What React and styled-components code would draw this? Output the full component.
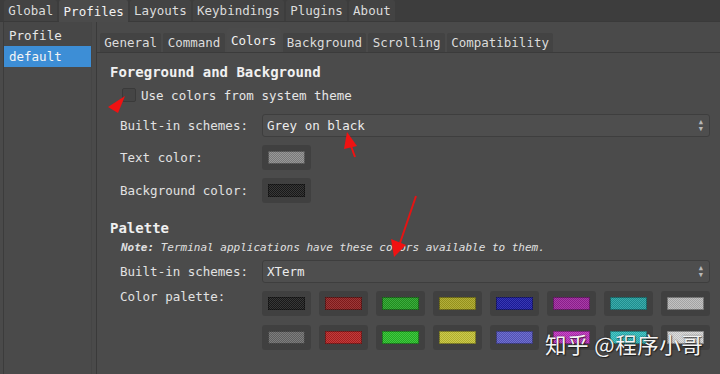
import React from "react";
import styled, { createGlobalStyle } from "styled-components";

const Global = createGlobalStyle`
  html, body { margin: 0; padding: 0; background: #484848; }
  body { font-family: "DejaVu Sans Mono", "Liberation Mono", monospace; font-size: 12.5px; color: #e4e4e4; }
  * { box-sizing: border-box; }
`;

const Window = styled.div`
  position: relative;
  width: 720px;
  height: 374px;
  overflow: hidden;
  display: flex;
  flex-direction: column;
  background: #4a4a4a;
`;

const TopBar = styled.div`
  height: 22px;
  display: flex;
  align-items: flex-end;
  gap: 2px;
  padding-left: 4px;
  background: #3d3d3d;
  border-bottom: 1px solid #3a3a3a;
`;

const Tab = styled.div`
  height: ${(p) => p.$h}px;
  padding: 0 4.15px;
  display: flex;
  align-items: center;
  white-space: nowrap;
  background: ${(p) => (p.$active ? "#4b4b4b" : "#434343")};
  color: ${(p) => (p.$active ? "#f2f2f2" : "#dcdcdc")};
  border-radius: 2px 2px 0 0;
  margin-bottom: ${(p) => (p.$active ? "-1px" : "0")};
`;

const InnerTab = styled(Tab)`
  padding: 0 4.33px;
`;

const Body = styled.div`
  flex: 1;
  display: flex;
  min-height: 0;
`;

const Sidebar = styled.div`
  width: 97px;
  padding-left: 3px;
  border-right: 1px solid #3a3a3a;
  display: flex;
`;

const SideList = styled.div`
  width: 89px;
  border-left: 1px solid #3c3c3c;
  border-right: 1px solid #454545;
  display: flex;
  flex-direction: column;
`;

const SideHeader = styled.div`
  height: 24px;
  padding: 3px 0 0 5px;
  display: flex;
  align-items: center;
  background: #474747;
  color: #e8e8e8;
`;

const SideItem = styled.div`
  height: 21px;
  padding-left: 5px;
  display: flex;
  align-items: center;
  background: ${(p) => (p.$selected ? "#3d8ed6" : "transparent")};
  color: #f4f4f4;
`;

const Main = styled.div`
  flex: 1;
  display: flex;
  flex-direction: column;
  padding-top: 6px;
`;

const InnerTabs = styled.div`
  display: flex;
  align-items: flex-end;
  gap: 2px;
  padding-left: 3px;
  height: 24px;
`;

const Pane = styled.div`
  flex: 1;
  border-top: 1px solid #3b3b3b;
  background: #4b4b4b;
  padding: 11px 10px 0 13px;
  display: flex;
  flex-direction: column;
`;

const SectionTitle = styled.div`
  font-weight: bold;
  font-size: 14px;
  color: #f0f0f0;
  height: 16px;
  line-height: 16px;
  margin-top: ${(p) => p.$mt || 0}px;
`;

const CheckRow = styled.label`
  display: flex;
  align-items: center;
  gap: 5px;
  margin: 7px 0 0 12px;
  height: 16px;
  color: #e6e6e6;
`;

const CheckBox = styled.span`
  width: 14px;
  height: 14px;
  border-radius: 2px;
  background: #454545;
  border: 1px solid #3a3a3a;
`;

const FormRow = styled.div`
  display: flex;
  align-items: ${(p) => (p.$top ? "flex-start" : "center")};
  margin-left: 10px;
  margin-top: ${(p) => p.$mt || 0}px;
`;

const Label = styled.div`
  width: 142px;
  flex-shrink: 0;
  color: #e2e2e2;
  line-height: ${(p) => (p.$tight ? "12px" : "normal")};
`;

const Combo = styled.div`
  flex: 1;
  height: 23px;
  border: 1px solid #3e3e3e;
  border-radius: 3px;
  background: #4e4e4e;
  display: flex;
  align-items: center;
  justify-content: space-between;
  padding: 0 6px 0 4px;
  color: #ececec;
`;

const Spin = styled.span`
  display: flex;
  flex-direction: column;
  font-size: 7px;
  line-height: 7px;
  color: #b8b8b8;
`;

const ColorButton = styled.div`
  width: 49px;
  height: 25px;
  border-radius: 3px;
  background: #404040;
  padding: 6px 6px;
  flex-shrink: 0;
`;

const Swatch = styled.div`
  width: 100%;
  height: 100%;
  border: 1px solid rgba(0, 0, 0, 0.35);
  background-color: ${(p) => p.$c};
  background-image: repeating-conic-gradient(
    rgba(255, 255, 255, 0.12) 0 25%,
    rgba(0, 0, 0, 0.12) 0 50%
  );
  background-size: 2px 2px;
`;

const PaletteGrid = styled.div`
  display: grid;
  grid-template-columns: repeat(8, 49px);
  column-gap: 8px;
  row-gap: 9px;
`;

const Note = styled.div`
  font-style: italic;
  font-size: 11px;
  color: #e0e0e0;
  margin: 5px 0 0 11px;
  height: 14px;
  line-height: 14px;
  b { font-weight: bold; }
`;

const Overlay = styled.svg`
  position: absolute;
  left: 0;
  top: 0;
  pointer-events: none;
`;

const Watermark = styled.div`
  position: absolute;
  left: 545px;
  top: 328px;
  font-family: "Noto Sans CJK SC", "Noto Sans", sans-serif;
  font-size: 21.5px;
  color: #f4f4f4;
  letter-spacing: 0.5px;
  text-shadow: 0 0 2px rgba(0, 0, 0, 0.6), 1px 1px 1px rgba(0, 0, 0, 0.5);
  white-space: nowrap;
`;

const topTabs = ["Global", "Profiles", "Layouts", "Keybindings", "Plugins", "About"];
const innerTabs = ["General", "Command", "Colors", "Background", "Scrolling", "Compatibility"];
const palette = [
  "#1c1c1c", "#8e1e1e", "#23a023", "#a8a420", "#1e1ea8", "#9c229c", "#22a0a0", "#bababa",
  "#6c6c6c", "#b82222", "#28c028", "#c6c434", "#5c5cca", "#c232c2", "#32c2c2", "#dadada",
];

export default function App() {
  return (
    <Window>
      <Global />
      <TopBar>
        {topTabs.map((t) => (
          <Tab key={t} $h={t === "Profiles" ? 22 : 21} $active={t === "Profiles"}>{t}</Tab>
        ))}
      </TopBar>
      <Body>
        <Sidebar>
          <SideList>
            <SideHeader>Profile</SideHeader>
            <SideItem $selected>default</SideItem>
          </SideList>
        </Sidebar>
        <Main>
          <InnerTabs>
            {innerTabs.map((t) => (
              <InnerTab key={t} $h={t === "Colors" ? 25 : 19} $active={t === "Colors"}>{t}</InnerTab>
            ))}
          </InnerTabs>
          <Pane>
            <SectionTitle>Foreground and Background</SectionTitle>
            <CheckRow>
              <CheckBox />
              Use colors from system theme
            </CheckRow>
            <FormRow $mt={11}>
              <Label>Built-in schemes:</Label>
              <Combo>
                Grey on black
                <Spin><span>▲</span><span>▼</span></Spin>
              </Combo>
            </FormRow>
            <FormRow $mt={8}>
              <Label>Text color:</Label>
              <ColorButton><Swatch $c="#8a8a8a" /></ColorButton>
            </FormRow>
            <FormRow $mt={8}>
              <Label>Background color:</Label>
              <ColorButton><Swatch $c="#1c1c1c" /></ColorButton>
            </FormRow>
            <SectionTitle $mt={17}>Palette</SectionTitle>
            <Note><b>Note:</b> Terminal applications have these colors available to them.</Note>
            <FormRow $mt={5}>
              <Label>Built-in schemes:</Label>
              <Combo>
                XTerm
                <Spin><span>▲</span><span>▼</span></Spin>
              </Combo>
            </FormRow>
            <FormRow $mt={8} $top>
              <Label $tight>Color palette:</Label>
              <PaletteGrid>
                {palette.map((c, i) => (
                  <ColorButton key={i}><Swatch $c={c} /></ColorButton>
                ))}
              </PaletteGrid>
            </FormRow>
          </Pane>
        </Main>
      </Body>
      <Overlay width="720" height="374" viewBox="0 0 720 374">
        <polygon points="125,96 108,107 118,113" fill="#f01212" />
        <polygon points="347,132 344,149 357,146" fill="#f01212" />
        <line x1="351" y1="146" x2="355" y2="157" stroke="#f01212" strokeWidth="2" />
        <line x1="416" y1="196" x2="400" y2="243" stroke="#e41414" strokeWidth="2" />
        <polygon points="394,257 391,239 406,245" fill="#f01212" />
      </Overlay>
      <Watermark>知乎 @程序小哥</Watermark>
    </Window>
  );
}
